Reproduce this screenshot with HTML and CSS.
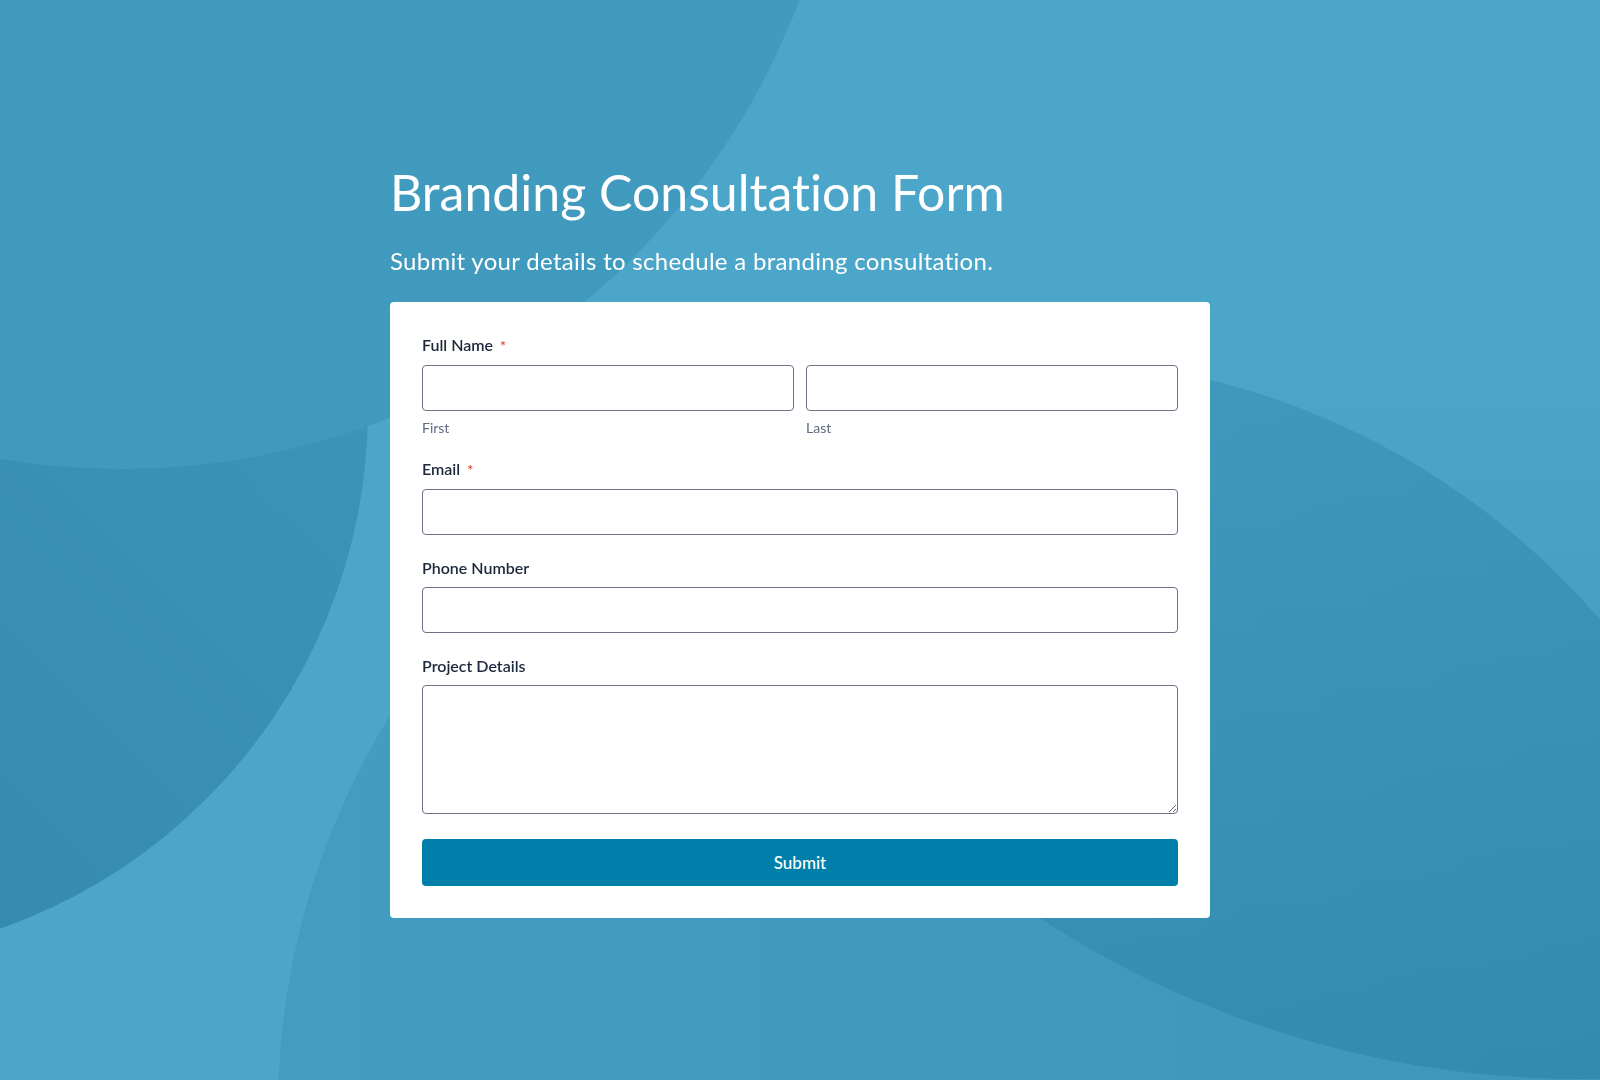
FILE: index.html
```html
<!DOCTYPE html>
<html lang="en">
<head>
<meta charset="utf-8">
<title>Branding Consultation Form</title>
<link rel="stylesheet" href="styles.css">
</head>
<body>
<svg class="bg" viewBox="0 0 1600 1080" preserveAspectRatio="none" aria-hidden="true">
  <defs>
    <linearGradient id="gA" x1="0" y1="0" x2="0" y2="1">
      <stop offset="0" stop-color="#449dc1"/>
      <stop offset="1" stop-color="#409abe"/>
    </linearGradient>
    <linearGradient id="gB" x1="1" y1="0" x2="0" y2="1">
      <stop offset="0" stop-color="#419abe"/>
      <stop offset="1" stop-color="#2f82a9"/>
    </linearGradient>
    <linearGradient id="gC" x1="0" y1="0" x2="1" y2="0">
      <stop offset="0" stop-color="#439dc1"/>
      <stop offset="1" stop-color="#3d96bb"/>
    </linearGradient>
    <linearGradient id="gD" gradientUnits="userSpaceOnUse" x1="0" y1="350" x2="0" y2="1080">
      <stop offset="0" stop-color="#14648c" stop-opacity="0"/>
      <stop offset="1" stop-color="#14648c" stop-opacity="0.24"/>
    </linearGradient>
  </defs>
  <rect width="1600" height="1080" fill="#4ba6c9"/>
  <circle cx="-183" cy="409" r="551" fill="url(#gB)"/>
  <circle cx="122" cy="-255" r="724" fill="url(#gA)"/>
  <circle cx="1030" cy="1110" r="752" fill="url(#gC)"/>
  <circle cx="1580" cy="92" r="987" fill="url(#gD)"/>
</svg>
<main class="page">
  <h1 class="title">Branding Consultation Form</h1>
  <p class="subtitle">Submit your details to schedule a branding consultation.</p>
  <form class="card">
    <div class="field">
      <label class="label">Full Name<span class="req">*</span></label>
      <div class="name-row">
        <div class="name-col">
          <input class="input" type="text">
          <span class="sub">First</span>
        </div>
        <div class="name-col">
          <input class="input" type="text">
          <span class="sub">Last</span>
        </div>
      </div>
    </div>
    <div class="field">
      <label class="label">Email<span class="req">*</span></label>
      <input class="input" type="email">
    </div>
    <div class="field">
      <label class="label">Phone Number</label>
      <input class="input" type="tel">
    </div>
    <div class="field">
      <label class="label">Project Details</label>
      <textarea class="input textarea"></textarea>
    </div>
    <button class="submit" type="button">Submit</button>
  </form>
</main>
</body>
</html>
```

FILE: styles.css
```css
html, body {
  margin: 0;
  height: 100%;
}

body {
  font-family: Lato, "Noto Sans", sans-serif;
  font-variant-ligatures: none;
  background: #4ba6c9;
  overflow: hidden;
}

.bg {
  position: fixed;
  top: 0;
  left: 0;
  width: 100%;
  height: 100%;
  z-index: 0;
  display: block;
}

.page {
  position: relative;
  z-index: 1;
  width: 820px;
  margin: 0 auto;
  padding-top: 163px;
}

.title {
  margin: 0 0 27px;
  font-size: 50px;
  line-height: 58px;
  font-weight: 400;
  color: #ffffff;
}

.subtitle {
  margin: 0 0 28px;
  font-size: 24px;
  line-height: 26px;
  font-weight: 400;
  letter-spacing: 0.3px;
  color: #ffffff;
}

.card {
  background: #ffffff;
  border-radius: 4px;
  padding: 33px 32px 32px;
  display: flex;
  flex-direction: column;
  gap: 23px;
}

.field {
  display: flex;
  flex-direction: column;
}

.label {
  display: block;
  font-size: 16px;
  line-height: 20px;
  font-weight: 600;
  color: #1c283b;
  margin-bottom: 9px;
}

.req {
  color: #e8412f;
  font-size: 14px;
  margin-left: 7px;
}

.name-row {
  display: flex;
  gap: 12px;
}

.name-col {
  flex: 1;
  display: flex;
  flex-direction: column;
}

.input {
  box-sizing: border-box;
  display: block;
  width: 100%;
  height: 46px;
  margin: 0;
  border: 1px solid #6c7386;
  border-radius: 4px;
  background: #ffffff;
  font-family: Lato, "Noto Sans", sans-serif;
  font-size: 16px;
  padding: 8px 12px;
}

.textarea {
  height: 129px;
  resize: vertical;
}

.sub {
  margin-top: 8px;
  font-size: 14px;
  line-height: 17px;
  color: #5f6b80;
}

.submit {
  box-sizing: border-box;
  margin-top: 2px;
  height: 47px;
  width: 100%;
  border: none;
  border-radius: 4px;
  background: #007fab;
  color: #ffffff;
  font-family: Lato, "Noto Sans", sans-serif;
  font-size: 17px;
  font-weight: 500;
  cursor: pointer;
}
```
